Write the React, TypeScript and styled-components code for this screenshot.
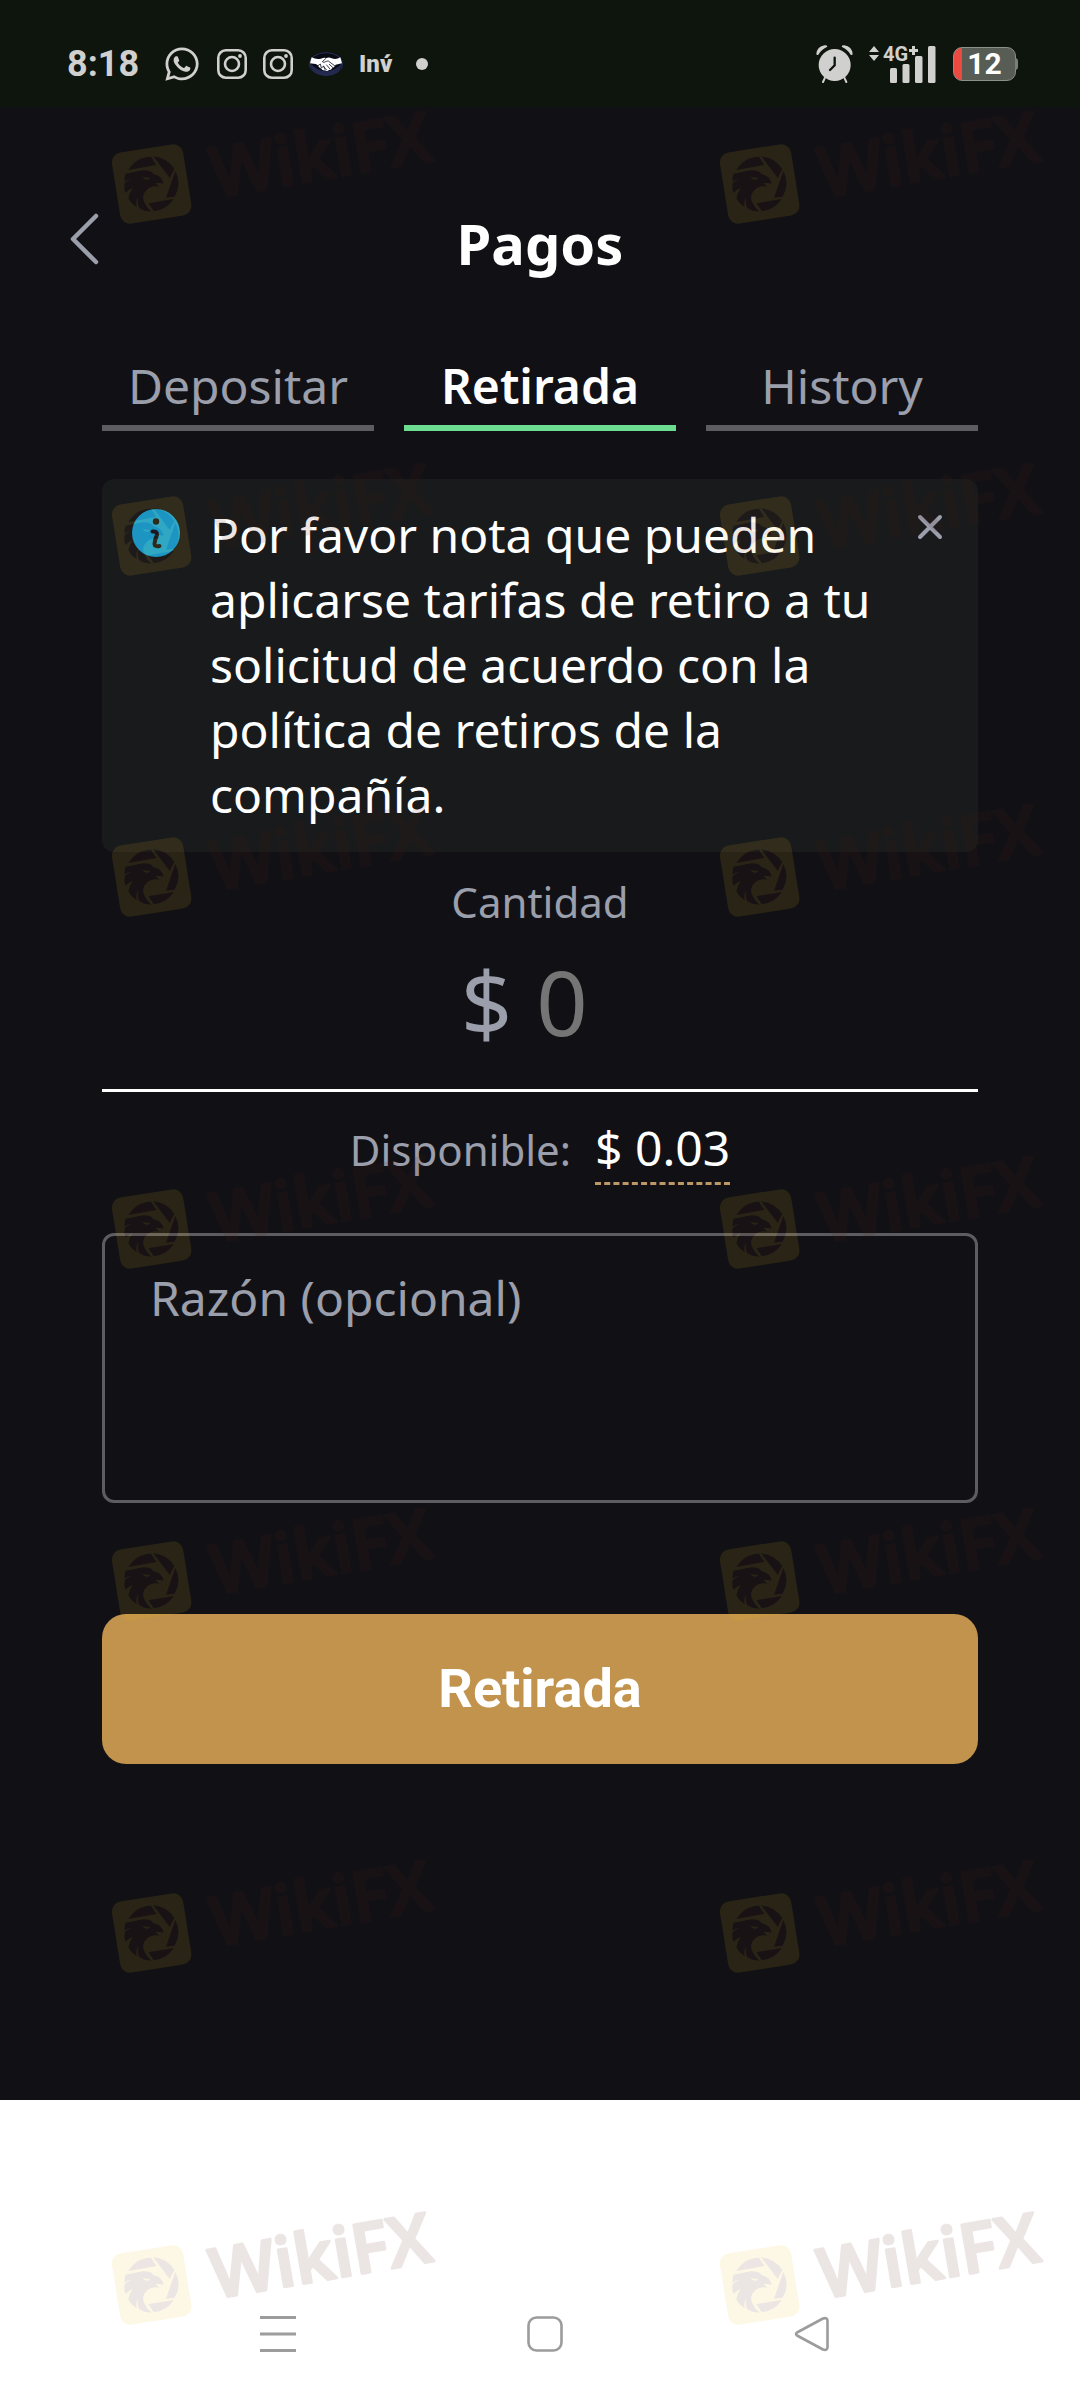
import React from "react";
import styled, { createGlobalStyle } from "styled-components";
import { FaWhatsapp } from "react-icons/fa";

const color = {
  page: "#111115",
  status: "#0e150d",
  statusInk: "#d0d0ce",
  muted: "#9b9eab",
  line: "#5d5d61",
  green: "#6bdc90",
  gold: "#c1934c",
  info: "#17a5d9",
  notice: "#181a1b",
  nav: "#9c9c9c",
  markInk: "#501c16",
  markGold: "#f5be1e",
};

const GlobalStyle = createGlobalStyle`
  * { box-sizing: border-box; }
  body {
    margin: 0;
    background: #fff;
    font-family: "Noto Sans", "Open Sans", sans-serif;
    font-size: 48px;
    line-height: 65px;
  }
  button, input, textarea { font: inherit; }
  svg { display: block; flex: none; }
`;

const Screen = styled.div`
  position: relative;
  display: flex;
  flex-direction: column;
  min-height: 100vh;
`;

const StatusBar = styled.header`
  display: flex;
  align-items: center;
  justify-content: space-between;
  height: 107px;
  padding: 20px 60px 0 67px;
  background: ${color.status};
  color: ${color.statusInk};
`;

const StatusGroup = styled.div`
  display: flex;
  align-items: center;
  gap: 16px;
`;

const Clock = styled.time`
  margin-right: 8px;
  font: 700 36px/40px Roboto, sans-serif;
`;

const AppLabel = styled.span`
  font: 900 24px/30px Roboto, sans-serif;
`;

const Battery = styled.span`
  position: relative;
  display: grid;
  place-items: center;
  width: 63px;
  height: 34px;
  margin-right: 4px;
  border: 1px solid #8b918a;
  border-radius: 9px;
  background: linear-gradient(to right, #ea4a40 8px, #575d55 8px);
  color: #fff;
  font: 700 30px/32px Roboto, sans-serif;

  &::after {
    content: "";
    position: absolute;
    left: 100%;
    top: 10px;
    width: 3px;
    height: 12px;
    border-radius: 0 3px 3px 0;
    background: #7a8079;
  }
`;

const Content = styled.div`
  flex: 1;
  padding-top: 98px;
  background: ${color.page};
`;

const TitleBar = styled.div`
  display: grid;
  grid-template-columns: 1fr auto 1fr;
  align-items: start;
  padding: 0 50px;
`;

const IconButton = styled.button`
  display: grid;
  place-items: center;
  justify-self: start;
  padding: 0;
  border: 0;
  background: none;
  color: ${color.muted};
`;

const BackButton = styled(IconButton)`
  width: 68px;
  height: 68px;
`;

const Title = styled.h1`
  margin: 0;
  color: #fff;
  font-size: 56px;
  font-weight: 700;
  line-height: 76px;
`;

const Form = styled.form`
  display: flex;
  flex-direction: column;
  padding: 72px 102px 100px;
`;

const Tabs = styled.nav`
  display: grid;
  grid-template-columns: repeat(3, 1fr);
  gap: 30px;
`;

const Tab = styled.button<{ $active?: boolean }>`
  padding: 0 0 7px;
  border: 0;
  border-bottom: 6px solid ${(p) => (p.$active ? color.green : color.line)};
  background: none;
  color: ${(p) => (p.$active ? "#fff" : color.muted)};
  font-weight: ${(p) => (p.$active ? 600 : 400)};
`;

const Notice = styled.section`
  display: flex;
  align-items: flex-start;
  gap: 30px;
  margin-top: 48px;
  padding: 23px 30px 25px;
  border-radius: 12px;
  background: ${color.notice};
  color: #fff;

  > svg { margin-top: 7px; }
`;

const NoticeText = styled.p`
  flex: 1;
  margin: 0;
`;

const CloseButton = styled(IconButton)`
  width: 36px;
  height: 50px;
`;

const Label = styled.label`
  color: ${color.muted};
  font-size: 42px;
  line-height: 57px;
`;

const AmountLabel = styled(Label)`
  margin-top: 21px;
  text-align: center;
`;

const AmountRow = styled.div`
  display: flex;
  align-items: baseline;
  justify-content: center;
  gap: 24px;
  margin-top: 10px;
  padding-bottom: 27px;
  border-bottom: 3px solid #fff;
  color: ${color.muted};
  font-size: 90px;
  line-height: 122px;
`;

const AmountInput = styled.input`
  width: 83px;
  height: 122px;
  padding: 0;
  border: 0;
  outline: 0;
  background: none;
  color: #fff;

  &::placeholder { color: #757575; opacity: 1; }
`;

const Available = styled.div`
  display: flex;
  align-items: baseline;
  justify-content: center;
  gap: 24px;
  margin-top: 23px;
`;

const AvailableLink = styled.a`
  padding-bottom: 2px;
  border-bottom: 3px dashed #bd9866;
  color: #fff;
  text-decoration: none;
`;

const Reason = styled.textarea`
  display: block;
  width: 100%;
  height: 270px;
  margin-top: 48px;
  padding: 29px 45px;
  border: 3px solid ${color.line};
  border-radius: 12px;
  outline: 0;
  resize: none;
  background: none;
  color: #fff;

  &::placeholder { color: ${color.muted}; opacity: 1; }
`;

const Submit = styled.button`
  height: 150px;
  margin-top: 111px;
  border: 0;
  border-radius: 24px;
  background: ${color.gold};
  color: #fff;
  font: 700 54px/60px Roboto, sans-serif;
`;

const SystemNav = styled.nav`
  display: grid;
  grid-template-columns: repeat(3, 1fr);
  justify-items: center;
  align-items: center;
  height: 300px;
  padding: 168px 135px 0 144px;
  background: #fff;
`;

const NavButton = styled(IconButton)`
  width: 60px;
  height: 60px;
  justify-self: center;
  color: ${color.nav};
`;

const WatermarkLayer = styled.div`
  position: absolute;
  inset: 0;
  display: grid;
  grid-template-columns: repeat(2, 608px);
  grid-template-rows: 352px 341px repeat(5, 352px);
  padding: 83px 0 0 106px;
  overflow: hidden;
  pointer-events: none;

  svg { opacity: 0.11; }
`;

function InstagramIcon() {
  return (
    <svg width="30" height="30" viewBox="0 0 30 30" fill="none" stroke="currentColor" strokeWidth="2.6">
      <rect x="1.3" y="1.3" width="27.4" height="27.4" rx="7.5" />
      <circle cx="15" cy="15" r="7" />
      <circle cx="23" cy="7" r="1.9" fill="currentColor" stroke="none" />
    </svg>
  );
}

function HandshakeIcon() {
  return (
    <svg width="34" height="24" viewBox="0 0 102 72">
      <ellipse cx="51" cy="36" rx="50" ry="34" fill="#080b14" stroke="#292f5c" strokeWidth="3" />
      <path d="M3 34Q51 82 99 34Q96 66 51 71Q6 66 3 34Z" fill="#292f5c" opacity=".8" />
      <path
        d="M8 16Q22 24 36 20Q44 16 52 18Q60 15 68 19Q82 24 94 16L99 34L80 38Q76 46 70 48Q66 55 60 54Q54 59 48 55Q40 56 37 50Q28 48 27 40L20 36L3 34Z"
        fill="#fff"
      />
      <path
        d="M52 18L40 29Q44 34 52 28L58 27L78 42M60 36L72 47M52 38L63 51M43 43L53 54M27 41L34 36L37 48L44 42L48 53"
        fill="none"
        stroke="#0b1024"
        strokeWidth="2.4"
      />
    </svg>
  );
}

function AlarmIcon() {
  return (
    <svg width="37" height="38" viewBox="0 0 111 114">
      <g fill="currentColor">
        <circle cx="56" cy="60" r="48" />
        <path d="M1 27Q3 5 26 1Q33 0 34 5Q17 12 7 29Q2 32 1 27Z" />
        <path d="M110 27Q108 5 85 1Q78 0 77 5Q94 12 104 29Q109 32 110 27Z" />
      </g>
      <path d="M27 98L21 111M85 98L91 111" stroke="currentColor" strokeWidth="6" strokeLinecap="round" />
      <path d="M56 38V61L42 75" fill="none" stroke={color.status} strokeWidth="7" strokeLinecap="round" />
    </svg>
  );
}

function SignalIcon() {
  return (
    <svg width="68" height="50" viewBox="0 -6 68 50" fill="currentColor">
      <path d="M0 7L5 1L10 7ZM0 10L5 16L10 10Z" />
      <text x="14" y="16" fontFamily="Roboto, sans-serif" fontSize="20" fontWeight="700">
        4G
      </text>
      <path d="M40 5.500H49M44.500 1V10" stroke="currentColor" strokeWidth="3" />
      <rect x="21" y="23" width="7" height="15" rx="1.500" />
      <rect x="33.500" y="19" width="7" height="19" rx="1.500" />
      <rect x="46" y="11" width="7.500" height="27" rx="1.500" />
      <rect x="59" y="1" width="7.500" height="37" rx="1.500" />
    </svg>
  );
}

function InfoIcon() {
  return (
    <svg width="48" height="48" viewBox="0 0 48 48">
      <circle cx="24" cy="24" r="24" fill={color.info} />
      <circle cx="24" cy="12.500" r="3.200" fill="#15191c" />
      <path
        d="M20.500 22.500Q25.500 22 25 26Q22.500 31 22.500 35Q22.800 38 27.500 37"
        fill="none"
        stroke="#15191c"
        strokeWidth="4"
        strokeLinecap="round"
      />
    </svg>
  );
}

function Watermark() {
  return (
    <svg width="360" height="180" viewBox="50 310 1080 540">
      <rect x="79" y="505" width="216" height="216" rx="30" fill={color.markGold} transform="rotate(-9 187 613)" />
      <g fill={color.markInk}>
        <path d="M117 571A82 82 0 0 1 185 531L201 556Z" />
        <path d="M192 530A82 82 0 0 1 255 568L241 595Z" />
        <path d="M258 573A82 82 0 0 1 256 651L230 654Z" />
        <path d="M177 671L253 658A82 82 0 0 1 194 695Z" />
        <path d="M109 582L160 572Q186 571 192 583Q218 588 223 612Q210 609 198 611Q206 616 210 621Q186 617 172 631Q155 648 165 668Q172 685 186 696Q160 694 149 684Q143 670 146 653Q139 664 142 682Q125 673 117 655Q120 640 130 625Q118 630 108 640Q103 625 106 611Q114 601 127 597Q115 598 105 606Q105 592 109 582Z" />
      </g>
      <path d="M160 592L182 595Q180 602 171 600Q164 599 160 592Z" fill={color.markGold} />
      <text
        fontFamily='"Open Sans", "Noto Sans", sans-serif'
        fontSize="207"
        fontWeight="600"
        fill={color.markInk}
        stroke={color.markInk}
        strokeWidth="9"
        strokeLinejoin="round"
        transform="translate(376 654) rotate(-9.700)"
      >
        WikiFX
      </text>
    </svg>
  );
}

export default function App() {
  return (
    <>
      <GlobalStyle />
      <Screen>
        <StatusBar>
          <StatusGroup>
            <Clock>8:18</Clock>
            <FaWhatsapp size={38} />
            <InstagramIcon />
            <InstagramIcon />
            <HandshakeIcon />
            <AppLabel>{"Inv\u0301"}</AppLabel>
            <svg width="28" height="12" viewBox="0 0 28 12">
              <circle cx="14" cy="6" r="6" fill="currentColor" />
            </svg>
          </StatusGroup>
          <StatusGroup>
            <AlarmIcon />
            <SignalIcon />
            <Battery>12</Battery>
          </StatusGroup>
        </StatusBar>

        <Content>
          <TitleBar>
            <BackButton type="button" aria-label="Volver">
              <svg width="30" height="52" viewBox="0 0 30 52" fill="none" stroke="currentColor" strokeWidth="4.500" strokeLinecap="round" strokeLinejoin="round">
                <path d="M27 3L4 26L27 49" />
              </svg>
            </BackButton>
            <Title>Pagos</Title>
          </TitleBar>

          <Form onSubmit={(e) => e.preventDefault()}>
            <Tabs>
              <Tab type="button">Depositar</Tab>
              <Tab type="button" $active>Retirada</Tab>
              <Tab type="button">History</Tab>
            </Tabs>

            <Notice>
              <InfoIcon />
              <NoticeText>
                Por favor nota que pueden aplicarse tarifas de retiro a tu solicitud de acuerdo con la
                política de retiros de la compañía.
              </NoticeText>
              <CloseButton type="button" aria-label="Cerrar">
                <svg width="26" height="26" viewBox="0 0 26 26" stroke="currentColor" strokeWidth="4" strokeLinecap="round">
                  <path d="M3 3L23 23M23 3L3 23" />
                </svg>
              </CloseButton>
            </Notice>

            <AmountLabel htmlFor="amount">Cantidad</AmountLabel>
            <AmountRow>
              <span>$</span>
              <AmountInput id="amount" inputMode="decimal" placeholder="0" />
            </AmountRow>

            <Available>
              <Label as="span">Disponible:</Label>
              <AvailableLink href="#amount">$ 0.03</AvailableLink>
            </Available>

            <Reason aria-label="Razón (opcional)" placeholder="Razón (opcional)" />
            <Submit type="submit">Retirada</Submit>
          </Form>
        </Content>

        <SystemNav>
          <NavButton type="button" aria-label="Recientes">
            <svg width="36" height="36" viewBox="0 0 36 36" stroke="currentColor" strokeWidth="3">
              <path d="M0 1.500H36M0 18H36M0 34.500H36" />
            </svg>
          </NavButton>
          <NavButton type="button" aria-label="Inicio">
            <svg width="36" height="36" viewBox="0 0 36 36" fill="none" stroke="currentColor" strokeWidth="2.600">
              <rect x="1.500" y="1.500" width="33" height="33" rx="8" />
            </svg>
          </NavButton>
          <NavButton type="button" aria-label="Atrás">
            <svg width="36" height="36" viewBox="0 0 36 36" fill="none" stroke="currentColor" strokeWidth="2.600" strokeLinejoin="round">
              <path d="M3 16.500L29 2.500Q33.500 1 33.500 5V31Q33.500 35 29 33.500L3 19.500Q1 18 3 16.500Z" />
            </svg>
          </NavButton>
        </SystemNav>

        <WatermarkLayer aria-hidden="true">
          {Array.from({ length: 14 }, (_, i) => (
            <Watermark key={i} />
          ))}
        </WatermarkLayer>
      </Screen>
    </>
  );
}
